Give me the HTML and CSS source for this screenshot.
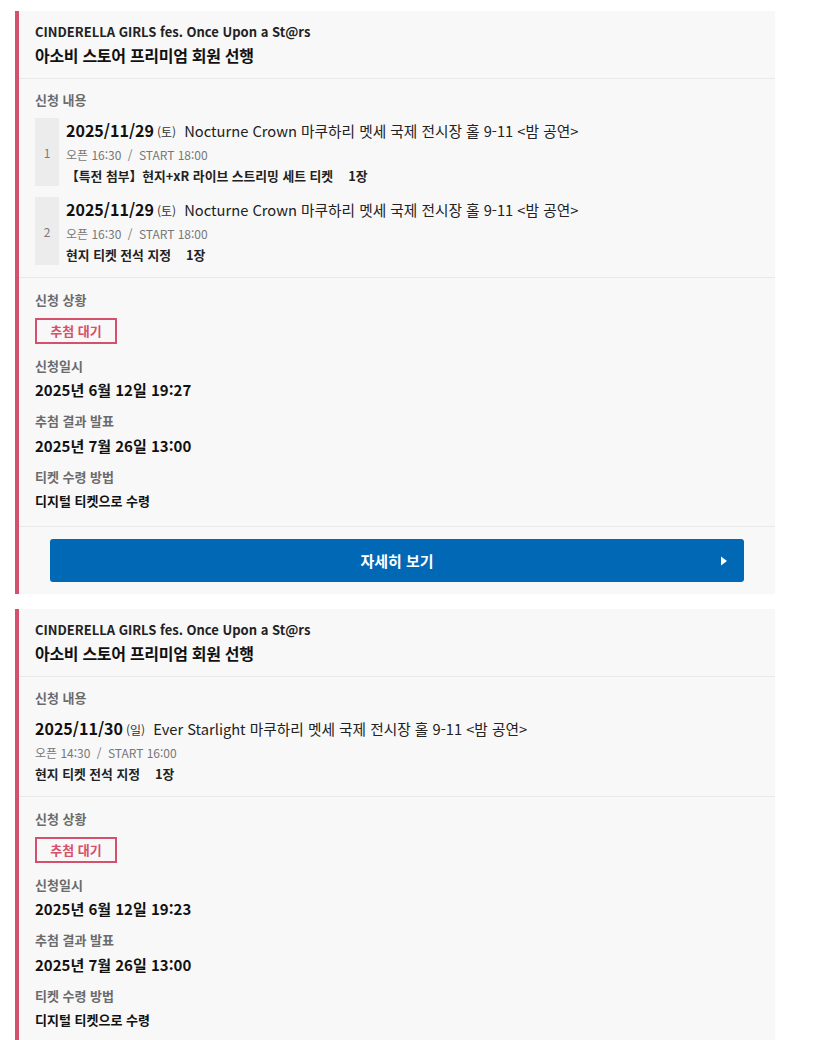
FILE: index.html
```html
<!DOCTYPE html>
<html lang="ko">
<head>
<meta charset="utf-8">
<title>신청 내역</title>
<link rel="stylesheet" href="styles.css">
</head>
<body>
<div class="list">
  <section class="card">
    <header class="card-head">
      <div class="event">CINDERELLA GIRLS fes. Once Upon a St@rs</div>
      <div class="lottery">아소비 스토어 프리미엄 회원 선행</div>
    </header>
    <div class="sec">
      <div class="label">신청 내용</div>
      <div class="entries">
        <div class="entry">
          <div class="num">1</div>
          <div class="entry-body">
            <div class="perf"><span class="date">2025/11/29</span><span class="dow">(토)</span><span class="venue">Nocturne Crown 마쿠하리 멧세 국제 전시장 홀 9-11 &lt;밤 공연&gt;</span></div>
            <div class="time">오픈 16:30 <span class="sl">/</span> START 18:00</div>
            <div class="ticket">【특전 첨부】현지+xR 라이브 스트리밍 세트 티켓<span class="qty">1장</span></div>
          </div>
        </div>
        <div class="entry">
          <div class="num">2</div>
          <div class="entry-body">
            <div class="perf"><span class="date">2025/11/29</span><span class="dow">(토)</span><span class="venue">Nocturne Crown 마쿠하리 멧세 국제 전시장 홀 9-11 &lt;밤 공연&gt;</span></div>
            <div class="time">오픈 16:30 <span class="sl">/</span> START 18:00</div>
            <div class="ticket">현지 티켓 전석 지정<span class="qty">1장</span></div>
          </div>
        </div>
      </div>
    </div>
    <div class="sec status">
      <div class="label">신청 상황</div>
      <div class="badge">추첨 대기</div>
      <div class="field f1">
        <div class="label">신청일시</div>
        <div class="value">2025년 6월 12일 19:27</div>
      </div>
      <div class="field">
        <div class="label">추첨 결과 발표</div>
        <div class="value">2025년 7월 26일 13:00</div>
      </div>
      <div class="field">
        <div class="label">티켓 수령 방법</div>
        <div class="value small">디지털 티켓으로 수령</div>
      </div>
    </div>
    <div class="sec action">
      <a class="btn" href="#"><span>자세히 보기</span><svg class="arrow" width="8" height="10" viewBox="0 0 8 10"><path d="M1 0.5 L7 5 L1 9.5 Z" fill="#fff"/></svg></a>
    </div>
  </section>

  <section class="card">
    <header class="card-head">
      <div class="event">CINDERELLA GIRLS fes. Once Upon a St@rs</div>
      <div class="lottery">아소비 스토어 프리미엄 회원 선행</div>
    </header>
    <div class="sec">
      <div class="label">신청 내용</div>
      <div class="entries">
        <div class="entry single">
          <div class="entry-body">
            <div class="perf"><span class="date">2025/11/30</span><span class="dow">(일)</span><span class="venue">Ever Starlight 마쿠하리 멧세 국제 전시장 홀 9-11 &lt;밤 공연&gt;</span></div>
            <div class="time">오픈 14:30 <span class="sl">/</span> START 16:00</div>
            <div class="ticket">현지 티켓 전석 지정<span class="qty">1장</span></div>
          </div>
        </div>
      </div>
    </div>
    <div class="sec status">
      <div class="label">신청 상황</div>
      <div class="badge">추첨 대기</div>
      <div class="field f1">
        <div class="label">신청일시</div>
        <div class="value">2025년 6월 12일 19:23</div>
      </div>
      <div class="field">
        <div class="label">추첨 결과 발표</div>
        <div class="value">2025년 7월 26일 13:00</div>
      </div>
      <div class="field">
        <div class="label">티켓 수령 방법</div>
        <div class="value small">디지털 티켓으로 수령</div>
      </div>
    </div>
  </section>
</div>
</body>
</html>
```

FILE: styles.css
```css
* { box-sizing: border-box; }
html, body { margin: 0; padding: 0; background: #fff; }
body {
  font-family: "Noto Sans CJK KR", "Noto Sans", sans-serif;
  color: #111;
  font-size: 13px;
}
.list {
  padding: 11px 0 0 15px;
  width: 775px;
  display: flex;
  flex-direction: column;
  gap: 15px;
}
.card {
  background: #f8f8f8;
  border-left: 4px solid #d4506c;
}
.card-head {
  padding: 10px 16px 11px;
  border-bottom: 1px solid #e9e9e9;
}
.event {
  font-size: 13px;
  font-weight: 700;
  line-height: 22px;
  color: #222;
}
.lottery {
  font-size: 16px;
  font-weight: 700;
  line-height: 24px;
  letter-spacing: -0.3px;
  color: #111;
}
.sec {
  padding: 11px 16px 12px;
  border-bottom: 1px solid #e9e9e9;
}
.sec:last-child { border-bottom: none; }
.sec.status {
  padding-top: 12px;
  padding-bottom: 15px;
}
.label {
  font-size: 13px;
  font-weight: 700;
  line-height: 20px;
  color: #6b6b6b;
}
.entries {
  margin-top: 8px;
  display: flex;
  flex-direction: column;
  gap: 11px;
}
.entry {
  display: flex;
  gap: 7px;
}
.num {
  width: 24px;
  background: #ececec;
  color: #7a7a7a;
  font-size: 12px;
  display: flex;
  align-items: center;
  justify-content: center;
}
.perf {
  font-size: 16px;
  line-height: 24px;
  height: 24px;
  white-space: nowrap;
}
.perf span { line-height: 1; }
.date {
  font-size: 16px;
  font-weight: 700;
  color: #111;
}
.dow {
  font-size: 12px;
  color: #333;
  margin-left: 3px;
}
.venue {
  font-size: 14.7px;
  color: #222;
  margin-left: 8px;
}
.time {
  font-size: 12px;
  line-height: 25px;
  height: 24px;
  color: #777;
}
.sl { margin: 0 3px; }
.ticket {
  font-size: 12.8px;
  font-weight: 700;
  line-height: 20px;
  height: 20px;
  color: #222;
}
.qty { margin-left: 15px; }
.badge {
  display: inline-block;
  margin-top: 8px;
  width: 82px;
  height: 26px;
  border: 2px solid #d4506c;
  color: #d4506c;
  font-size: 13px;
  font-weight: 700;
  line-height: 22px;
  text-align: center;
  vertical-align: top;
}
.field { margin-top: 9px; }
.field.f1 { margin-top: 12px; }
.value {
  margin-top: 2px;
  font-size: 15px;
  font-weight: 700;
  line-height: 24px;
  color: #111;
}
.field + .field .value { margin-top: 3px; }
.field .value.small {
  font-size: 13px;
  line-height: 20px;
  margin-top: 4px;
}
.sec.action {
  padding: 12px 31px 12px 31px;
}
.btn {
  position: relative;
  display: flex;
  align-items: center;
  justify-content: center;
  height: 43px;
  background: #0068b4;
  border-radius: 3px;
  color: #fff;
  text-decoration: none;
  font-size: 15px;
  font-weight: 700;
}
.arrow {
  position: absolute;
  right: 16px;
  top: 17px;
}
```
